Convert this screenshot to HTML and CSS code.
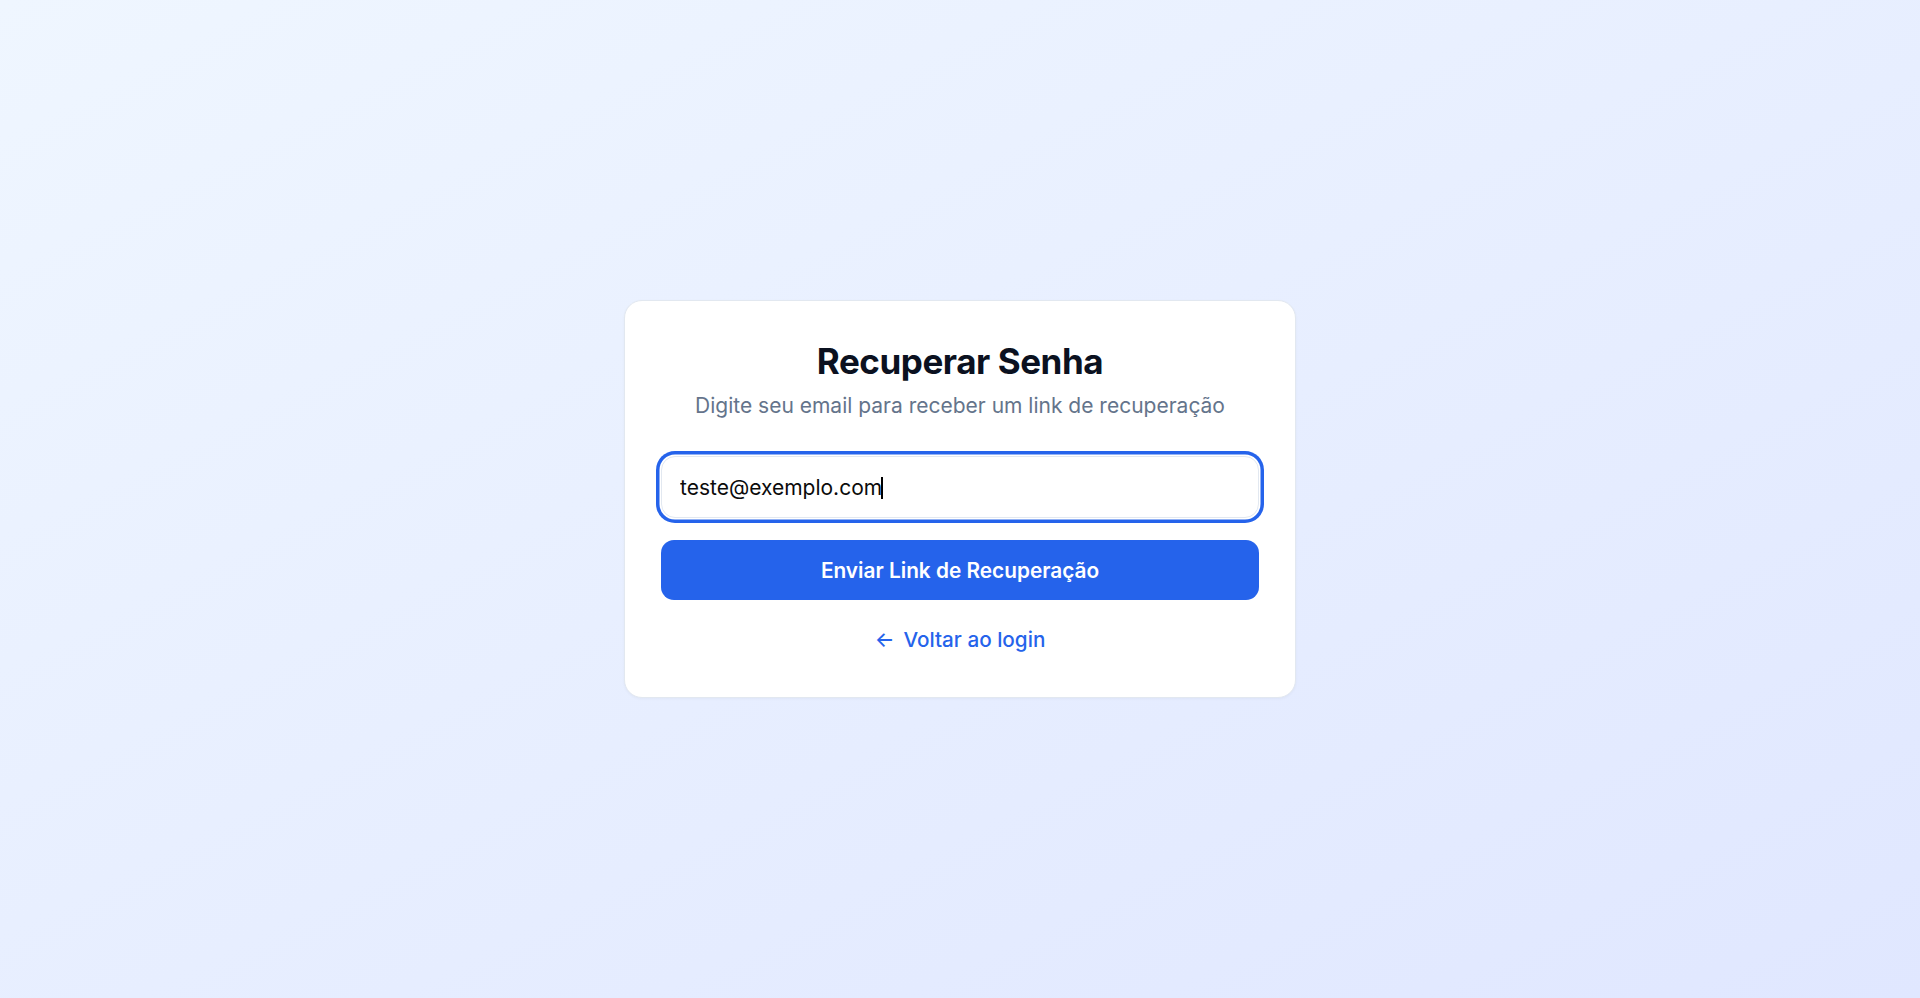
FILE: index.html
```html
<!DOCTYPE html>
<html lang="pt-BR">
<head>
<meta charset="utf-8">
<title>Recuperar Senha</title>
<link rel="stylesheet" href="styles.css">
</head>
<body>
<main class="page">
  <section class="card">
    <header class="card-header">
      <h1 class="title">Recuperar Senha</h1>
      <p class="subtitle">Digite seu email para receber um link de recuperação</p>
    </header>
    <form class="form">
      <div class="field-wrap">
        <input class="field" type="email" value="teste@exemplo.com" aria-label="Email">
        <span class="caret" aria-hidden="true"></span>
      </div>
      <button class="btn" type="button">Enviar Link de Recuperação</button>
    </form>
    <div class="back">
      <a class="back-link" href="#"><span class="back-arrow">←</span>Voltar ao login</a>
    </div>
  </section>
</main>
</body>
</html>
```

FILE: styles.css
```css
* {
  box-sizing: border-box;
}

html, body {
  margin: 0;
  padding: 0;
  height: 100%;
}

body {
  font-family: Inter, "Noto Sans", sans-serif;
  background: linear-gradient(to bottom right, #eff6ff, #e0e7ff);
  color: #111827;
}

.page {
  min-height: 100vh;
  display: flex;
  align-items: center;
  justify-content: center;
}

.card {
  width: 672px;
  background: #ffffff;
  border: 1px solid #e2e8f0;
  border-radius: 18px;
  padding: 40px 36px;
  box-shadow: 0 1px 3px rgba(15, 23, 42, 0.04);
}

.card-header {
  text-align: center;
  margin-bottom: 34px;
}

.title {
  margin: 0;
  font-size: 35px;
  line-height: 41.4px;
  font-weight: 700;
  color: #0b1120;
  letter-spacing: -0.45px;
}

.subtitle {
  margin: 8px 0 0;
  font-size: 21px;
  line-height: 32.2px;
  color: #64748b;
}

.form {
  display: flex;
  flex-direction: column;
  gap: 22px;
}

.field-wrap {
  position: relative;
}

.field {
  display: block;
  width: 100%;
  height: 62px;
  padding: 0 18px;
  border: 1px solid #e2e8f0;
  border-radius: 14px;
  font-family: inherit;
  font-size: 21px;
  color: #0b0b0b;
  background: #ffffff;
  outline: none;
  box-shadow: 0 0 0 1.5px #ffffff, 0 0 0 5px #2563eb;
}

.caret {
  position: absolute;
  left: 220px;
  top: 50%;
  width: 2px;
  height: 22px;
  margin-top: -10px;
  background: #000000;
}

.btn {
  display: block;
  width: 100%;
  height: 60px;
  border: none;
  border-radius: 13px;
  background: #2563eb;
  color: #ffffff;
  font-family: inherit;
  font-size: 20.8px;
  font-weight: 600;
  cursor: pointer;
}

.back {
  margin-top: 24px;
  text-align: center;
  line-height: 32.2px;
}

.back-link {
  font-size: 20.7px;
  font-weight: 500;
  color: #2563eb;
  text-decoration: none;
}

.back-arrow {
  margin-right: 9px;
}
```
